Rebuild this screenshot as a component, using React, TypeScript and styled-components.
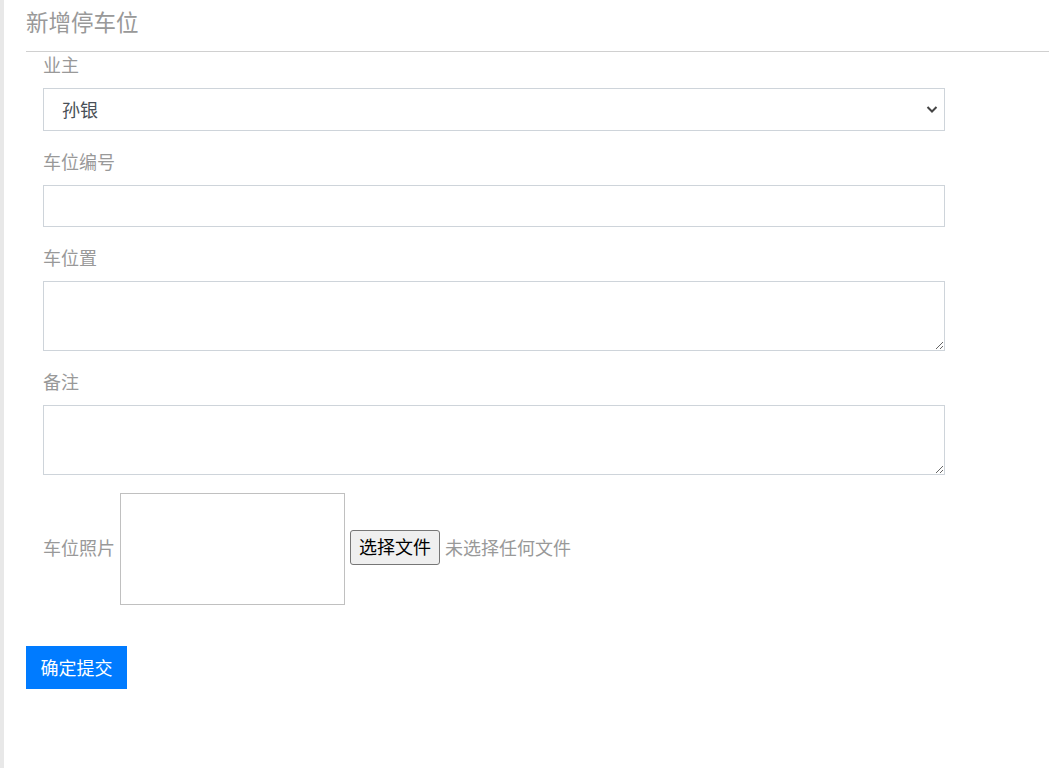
import { createGlobalStyle, styled } from "styled-components";

const GlobalStyle = createGlobalStyle`
  html, body {
    margin: 0;
    padding: 0;
    background: #fff;
  }
  body {
    font-family: "Liberation Sans", "Noto Sans CJK SC", sans-serif;
  }
  * {
    box-sizing: border-box;
  }
`;

const Page = styled.div`
  min-height: 768px;
  border-left: 4px solid #e8e8e8;
  padding-left: 22px;
`;

const Header = styled.div`
  height: 52px;
  border-bottom: 1px solid #d0d0d0;
  display: flex;
  align-items: flex-start;
`;

const Title = styled.h2`
  margin: 0;
  padding-top: 5px;
  font-size: 22.5px;
  font-weight: normal;
  line-height: 32px;
  color: #999;
  font-family: "Noto Sans CJK SC", sans-serif;
`;

const Form = styled.form`
  padding-left: 17px;
  width: 919px;
`;

const Group = styled.div`
  margin-bottom: 18px;
`;

const Label = styled.label`
  display: block;
  font-size: 18px;
  line-height: 25px;
  height: 27px;
  margin-bottom: 9px;
  color: #999;
  font-family: "Noto Sans CJK SC", sans-serif;
`;

const SelectWrap = styled.div`
  position: relative;
  width: 902px;
`;

const Select = styled.select`
  display: block;
  width: 100%;
  height: 43px;
  padding: 0 18px 2px;
  border: 1px solid #ced4da;
  background: #fff;
  color: #495057;
  font-size: 18px;
  font-family: "Noto Sans CJK SC", sans-serif;
  appearance: none;
  outline: none;
`;

const Chevron = styled.svg`
  position: absolute;
  right: 7px;
  top: 17px;
  pointer-events: none;
`;

const Input = styled.input`
  display: block;
  width: 902px;
  height: 42px;
  border: 1px solid #ced4da;
  padding: 0 18px;
  font-size: 18px;
  outline: none;
`;

const TextArea = styled.textarea`
  display: block;
  width: 902px;
  height: 70px;
  border: 1px solid #ced4da;
  padding: 8px 18px;
  font-size: 18px;
  outline: none;
  resize: vertical;
`;

const PhotoRow = styled.div`
  display: flex;
  align-items: center;
  gap: 5px;
  margin-bottom: 41px;
`;

const PhotoLabel = styled.span`
  font-size: 18px;
  line-height: 24px;
  padding-bottom: 5px;
  color: #999;
  font-family: "Noto Sans CJK SC", sans-serif;
`;

const Preview = styled.div`
  width: 225px;
  height: 112px;
  border: 1px solid #c0c0c0;
`;

const FileButton = styled.button`
  height: 35px;
  padding: 0 8px 2px;
  margin-bottom: 4px;
  background: #efefef;
  border: 1px solid #767676;
  border-radius: 3px;
  color: #000;
  font-size: 18px;
  line-height: 1;
  font-family: "Noto Sans CJK SC", sans-serif;
`;

const FileHint = styled(PhotoLabel)``;

const Submit = styled.button`
  display: block;
  width: 101px;
  height: 43px;
  margin-left: -17px;
  padding: 0 0 2px;
  border: none;
  background: #007bff;
  color: #fff;
  font-size: 18px;
  font-family: "Noto Sans CJK SC", sans-serif;
`;

const App = () => {
  return (
    <Page>
      <GlobalStyle />
      <Header>
        <Title>新增停车位</Title>
      </Header>
      <Form onSubmit={(e) => e.preventDefault()}>
        <Group>
          <Label>业主</Label>
          <SelectWrap>
            <Select defaultValue="孙银">
              <option value="孙银">孙银</option>
            </Select>
            <Chevron width="12" height="9" viewBox="0 0 12 9">
              <polyline
                points="1.5,2 6,6.5 10.5,2"
                fill="none"
                stroke="#444"
                strokeWidth="2"
              />
            </Chevron>
          </SelectWrap>
        </Group>
        <Group>
          <Label>车位编号</Label>
          <Input type="text" />
        </Group>
        <Group>
          <Label>车位置</Label>
          <TextArea />
        </Group>
        <Group>
          <Label>备注</Label>
          <TextArea />
        </Group>
        <PhotoRow>
          <PhotoLabel>车位照片</PhotoLabel>
          <Preview />
          <FileButton type="button">选择文件</FileButton>
          <FileHint>未选择任何文件</FileHint>
        </PhotoRow>
        <Submit type="submit">确定提交</Submit>
      </Form>
    </Page>
  );
};

export default App;
